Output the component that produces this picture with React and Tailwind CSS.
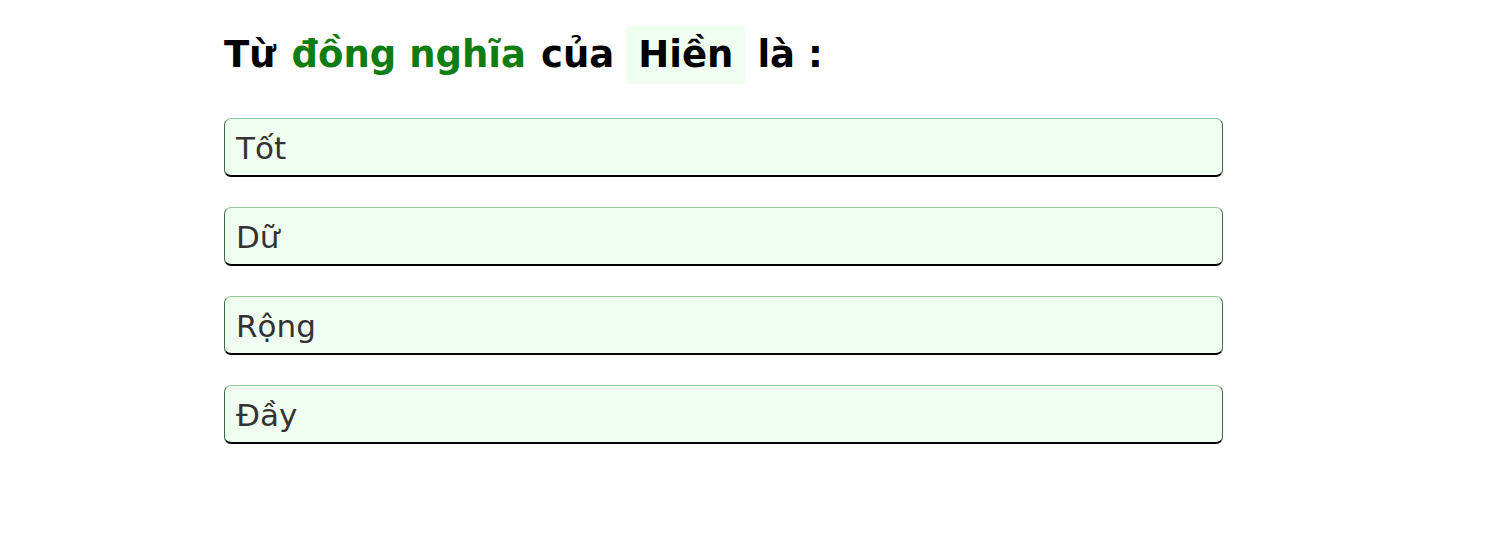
import React from 'react';

const answers = ['Tốt', 'Dữ', 'Rộng', 'Đầy'];

const App = () => {
  return (
    <div className="min-h-[548px] bg-white" style={{ fontFamily: '"DejaVu Sans", Verdana, sans-serif' }}>
      <div className="ml-[224px] w-[999px] pt-[26px]">
        <h1 className="flex items-center text-[37px] font-bold leading-[58px] text-black">
          <span>Từ</span>
          <span className="ml-[16px] text-[#0f7d12]">đồng nghĩa</span>
          <span className="ml-[15px]">của</span>
          <span className="ml-[12px] bg-[#effef0] px-[12px]">Hiền</span>
          <span className="ml-[12px]">là :</span>
        </h1>
        <div className="mt-[34px] flex flex-col gap-[30px]">
          {answers.map(a => (
            <div
              key={a}
              className="flex h-[59px] items-center rounded-[7px] border border-[#3f6a45] border-t-[#93c99b] border-b-2 border-b-black bg-[#effef0] px-[11px] pt-[2px] text-[31px] text-[#333333]"
            >
              {a}
            </div>
          ))}
        </div>
      </div>
    </div>
  );
};

export default App;
